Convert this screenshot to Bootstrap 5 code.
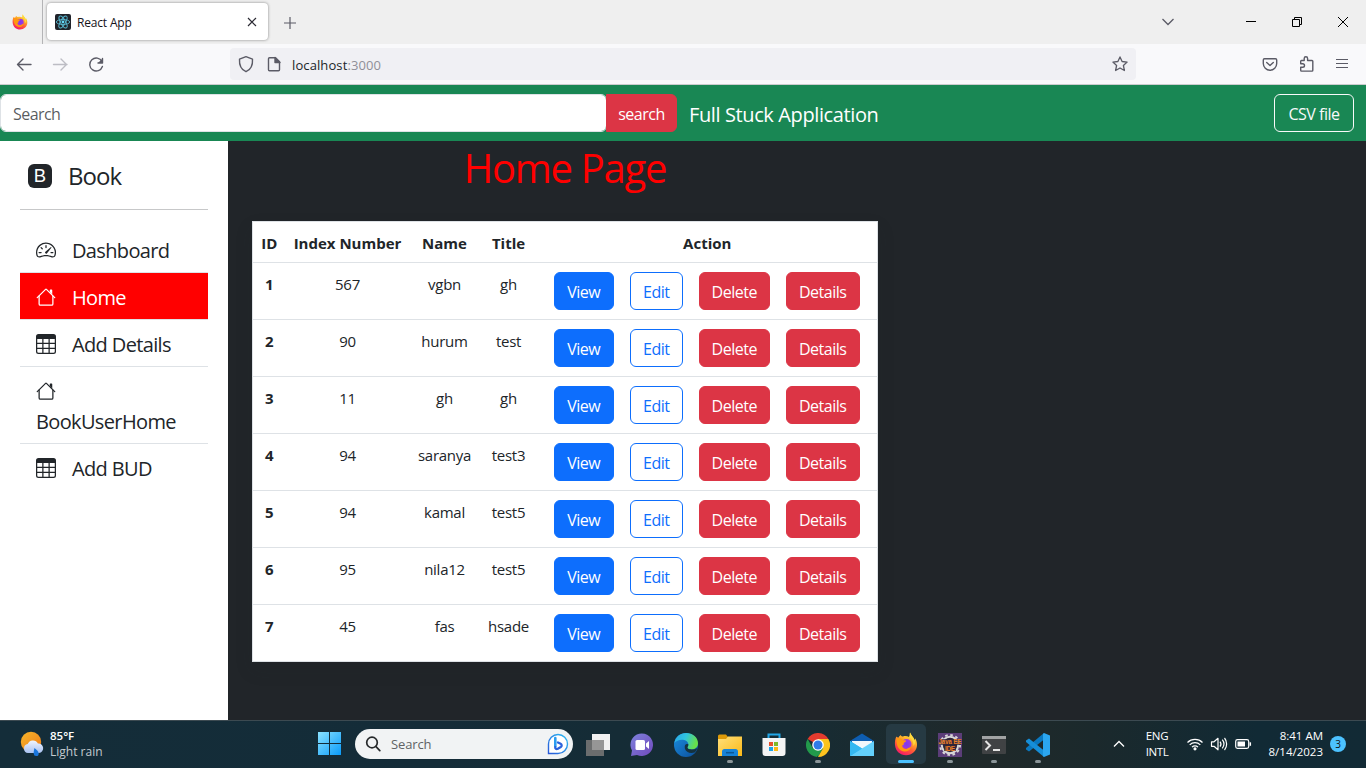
<!DOCTYPE html>
<html lang="en">
<head>
<meta charset="utf-8">
<title>React App</title>
<link rel="stylesheet" href="https://cdn.jsdelivr.net/npm/bootstrap@5.3.0/dist/css/bootstrap.min.css">
<style>
body{font-family:"Open Sans","Noto Sans",sans-serif;width:1366px;height:768px;overflow:hidden;letter-spacing:-.024em;font-size:16px}
svg{display:block;flex:none}
.tabs{height:44px;background:#efefef}
.pinned{width:43px;height:44px;border-right:1px solid #b4b4b6}
.tab-main{width:221px;height:37px;margin:3px 0 0 4px;border-radius:4px;background:#fff;box-shadow:0 0 3px rgba(0,0,0,.45);font-size:12px;color:#15141a;letter-spacing:-.015em}
.tools{height:41px;background:#f9f9fb;border-bottom:1px solid #ccccce}
.urlbar{width:906px;height:32px;background:#f0f0f4;border-radius:4px;font-size:13px;letter-spacing:.008em}
.topnav{height:56px;background:#198754}
.search-field{width:607px;height:38px;letter-spacing:-.035em;padding-top:7px}
.search-btn{width:71px;height:38px;margin-left:-1px;border-top-left-radius:0;border-bottom-left-radius:0;padding:7px 0 5px}
.brand-text{margin-left:12px;padding-top:4px}
.csv-btn{width:80px;height:38px;margin-right:12px;padding:7px 0 5px}
.btn{letter-spacing:-.03em}
.app{height:579px;background:#212529}
.side{width:228px;padding:20px 20px 0}
.brandrow{height:32px;padding-left:8px;font-size:24px;letter-spacing:-.04em}
.logo-sq{width:24px;height:24px;border-radius:6px;background:#212529;color:#fff;font:500 18.5px/24px "Liberation Sans",sans-serif;text-align:center;letter-spacing:0;margin-top:-2px}
.side hr{margin:16px 0;color:#212529}
.side .list-group-item{padding:10px 16px 6px;font-size:20px;line-height:30px;letter-spacing:-.032em;border-color:#dee2e6;color:#212529;border-width:0 0 1px;background:#fff}
.side .list-group-item:last-child{border-bottom:0}
.side .list-group-item.on{background:#f00;color:#fff}
.side svg{width:20px;height:20px;margin:-2px 16px 0 0}
.content-col{width:674px}
.page-title{font-size:40px;color:#f00;height:48px;line-height:48px;margin:3px 0 29px;letter-spacing:-.032em}
.book-table{width:626px;table-layout:fixed;border:1px solid #dee2e6;font-size:15px;letter-spacing:-.018em}
.book-table th{font-size:15px;letter-spacing:0}
.book-table td,.book-table th{padding:9px 0 8px;line-height:24px;color:#212529}
.book-table thead tr{height:41px}
.book-table thead th{padding-bottom:7px}
.book-table tbody tr{height:57px}
.book-table .btn{height:38px;padding:7px 1px 5px 0;margin:0 8px}
.w-view{width:60px}.w-edit{width:53px}.w-del{width:71px}.w-det{width:74px}
.taskbar{height:48px;border-top:1px solid #3c4a51;background:linear-gradient(90deg,#142d39 0,#142c38 32%,#162c34 58%,#20292a 72%,#1b292c 80%,#112a35 92%,#122a35);color:#fff;font-size:11.5px;line-height:16px;padding-bottom:2px}
.tb-search{width:218px;height:30px;border-radius:15px;background:#f1f3f4;color:#606365;font-size:13px;letter-spacing:-.01em}
.slot{width:44px;height:47px;padding-top:1px}
.slot::after{content:"";width:6px;height:3px;border-radius:2px;background:transparent;position:absolute;bottom:5px;left:19px}
.slot.open::after{background:#8b9599}
.slot.active-app{background:#263a43;border-radius:5px;width:40px;height:40px;margin:3px 2px 0;padding-top:0}
.slot.active-app::after{width:16px;left:12px;bottom:1px;background:#4cc2ff}
.notice{width:16px;height:16px;border-radius:50%;background:#4cc2ff;color:#111;font-size:10px}
</style>
</head>
<body class="d-flex flex-column">
<svg width="0" height="0" style="position:absolute">
<defs>
<linearGradient id="ffo" x1=".8" y1="0" x2=".3" y2="1"><stop offset="0" stop-color="#fff44f"/><stop offset=".35" stop-color="#ffb129"/><stop offset=".65" stop-color="#ff5a36"/><stop offset="1" stop-color="#f5156c"/></linearGradient>
<radialGradient id="ffp"><stop offset="0" stop-color="#7a3af0"/><stop offset="1" stop-color="#a23bd8"/></radialGradient>
<symbol id="fox" viewBox="0 0 24 24"><path fill="url(#ffo)" d="M16 .5c-.5 2 .3 3.500-1 4.500-1.500-1-4-1.400-6-.6C7.500 4.800 7 3.500 6.800 3 5.500 3.800 4.800 4.800 4.700 5.500 3.800 5.400 2.800 5.200 2.300 4.500 1.200 7 .7 10 1 13c.6 6 5 10.300 11 10.300s11-4.500 11-10.500c0-3-.8-5-2-6.600.1 1-.1 1.700-.4 2C20 5.500 17 3.500 16 .5z"/><circle cx="12.500" cy="12" r="5" fill="url(#ffp)"/><path fill="#ff980e" d="M2.500 6.500C5 5.500 7 6.500 8.500 8c1.500.4 3.300.2 3.700.8-.2 1.300-2.200 1.600-2.500 2.400.2 1.500-.5 2.200-1.700 2.300.3 3 3 4 5 3.200 1.500-.5 2.500-1.700 4-1.500-1 3-4 4.800-7 4.300C5 18.600 2 14 2.500 6.500z"/><path fill="#ffd83d" d="M16 .5c-.5 2 .3 3.500-1 4.500 3 1.500 5 5 4.300 9 2-2 2.200-4 1.300-5.800C20 5.500 17 3.500 16 .5z"/></symbol>
<symbol id="gauge" viewBox="0 0 16 16"><path d="M8 4a.5.5 0 0 1 .5.5V6a.5.5 0 0 1-1 0V4.500A.5.5 0 0 1 8 4zM3.732 5.732a.5.5 0 0 1 .707 0l.915.914a.5.5 0 1 1-.708.708l-.914-.915a.5.5 0 0 1 0-.707zM2 10a.5.5 0 0 1 .5-.5h1.586a.5.5 0 0 1 0 1H2.500A.5.5 0 0 1 2 10zm9.500 0a.5.5 0 0 1 .5-.5h1.500a.5.5 0 0 1 0 1H12a.5.5 0 0 1-.5-.5zm.754-4.246a.389.389 0 0 0-.527-.02L7.547 9.310a.91.91 0 1 0 1.302 1.258l3.434-4.297a.389.389 0 0 0-.029-.518z"/><path fill-rule="evenodd" d="M0 10a8 8 0 1 1 15.547 2.661c-.442 1.253-1.845 1.602-2.932 1.250C11.309 13.488 9.475 13 8 13c-1.474 0-3.310.488-4.615.911-1.087.352-2.490.003-2.932-1.250A7.988 7.988 0 0 1 0 10zm8-7a7 7 0 0 0-6.603 9.329c.203.575.923.876 1.680.63C4.397 12.533 6.358 12 8 12s3.604.532 4.923.96c.757.245 1.477-.056 1.680-.631A7 7 0 0 0 8 3z"/></symbol>
<symbol id="house" viewBox="0 0 16 16"><path fill-rule="evenodd" d="M2 13.500V7h1v6.500a.5.5 0 0 0 .5.5h9a.5.5 0 0 0 .5-.5V7h1v6.500a1.500 1.500 0 0 1-1.500 1.500h-9A1.500 1.500 0 0 1 2 13.500zm11-11V6l-2-2V2.500a.5.5 0 0 1 .5-.5h1a.5.5 0 0 1 .5.5z"/><path d="M7.293 1.500a1 1 0 0 1 1.414 0l6.647 6.646a.5.5 0 0 1-.708.708L8 2.207 1.354 8.854a.5.5 0 1 1-.708-.708L7.293 1.500z"/></symbol>
<symbol id="grid9" viewBox="0 0 16 16"><path d="M0 2a2 2 0 0 1 2-2h12a2 2 0 0 1 2 2v12a2 2 0 0 1-2 2H2a2 2 0 0 1-2-2V2zm15 2h-4v3h4V4zm0 4h-4v3h4V8zm0 4h-4v3h3a1 1 0 0 0 1-1v-2zm-5 3v-3H6v3h4zm-5 0v-3H1v2a1 1 0 0 0 1 1h3zm-4-4h4V8H1v3zm0-4h4V4H1v3zm5-3v3h4V4H6zm4 4H6v3h4V8z"/></symbol>
</defs></svg>

<header>
  <div class="tabs d-flex align-items-start">
    <div class="pinned d-flex align-items-center"><svg width="16" height="16" style="margin-left:12px"><use href="#fox"/></svg></div>
    <div class="tab-main d-flex align-items-center ps-2">
      <svg width="16" height="16" viewBox="0 0 16 16"><rect width="16" height="16" rx="2" fill="#20232a"/><g fill="none" stroke="#58b8d0" stroke-width=".9"><ellipse cx="8" cy="8" rx="6.700" ry="2.500"/><ellipse cx="8" cy="8" rx="6.700" ry="2.500" transform="rotate(60 8 8)"/><ellipse cx="8" cy="8" rx="6.700" ry="2.500" transform="rotate(120 8 8)"/></g><circle cx="8" cy="8" r="1.400" fill="#61dafb"/></svg>
      <span class="me-auto" style="margin-left:6px;padding-top:2px">React App</span>
      <svg class="me-2" width="16" height="16" viewBox="0 0 16 16" fill="none" stroke="#2b2a33" stroke-width="1.200"><path d="M4 4l8 8M12 4l-8 8"/></svg>
    </div>
    <svg class="ms-3" width="12" height="12" viewBox="0 0 12 12" style="margin-top:17px" stroke="#5b5b66" stroke-width="1.200"><path d="M6 0v12M0 6h12"/></svg>
    <svg class="ms-auto" width="190" height="44" viewBox="1160 0 190 44" fill="none" stroke="#000"><path d="M1162.500 19l5.500 5.500 5.500-5.500" stroke="#5b5b66" stroke-width="1.300"/><path d="M1246 21.500h10M1294.500 19.500v-2h7v7h-2M1292.500 19.500h7v7h-7zM1338 17l10 10M1348 17l-10 10"/></svg><span style="width:16px"></span>
  </div>
  <div class="tools d-flex align-items-center">
    <svg width="230" height="40" viewBox="0 0 230 40" fill="none" stroke="#5b5b66" stroke-width="1.400" stroke-linecap="round" stroke-linejoin="round"><path d="M31 20.500H17.500M23 15l-5.500 5.500L23 26"/><path stroke="#bdbdc4" d="M53.500 20.500H67M61 15l5.500 5.500L61 26"/><path d="M102 17.500a6.500 6.500 0 1 0 .4 5M102.500 14.500V19H98"/><path d="M103 14v5h-5z" fill="#5b5b66" stroke="none"/></svg>
    <div class="urlbar d-flex align-items-center">
      <svg width="62" height="32" viewBox="230 48 62 32" fill="none" stroke="#5b5b66" stroke-width="1.400" stroke-linejoin="round"><path d="M246 56.700l6.500 2.500c.4 6-1.500 10.300-6.500 12.500-5-2.200-6.900-6.500-6.500-12.500z"/><path d="M269.500 57.700h6l4 4v8a1 1 0 0 1-1 1h-9a1 1 0 0 1-1-1v-11a1 1 0 0 1 1-1z"/><path d="M275 57.500v5h5z" fill="#5b5b66"/></svg>
      <span class="me-auto" style="padding-top:3px">localhost<span style="color:#8f8f98">:3000</span></span>
      <svg width="16" height="16" viewBox="0 0 16 16" fill="none" stroke="#5b5b66" stroke-width="1.300" stroke-linejoin="round" style="margin-right:8px"><path d="M8 .9l2.100 4.600 5 .6-3.700 3.400 1 5L8 12l-4.400 2.500 1-5L.9 6.100l5-.6z"/></svg>
    </div>
    <svg class="ms-auto" width="90" height="40" viewBox="1260 44 90 40" fill="none" stroke="#5b5b66" stroke-width="1.400" stroke-linejoin="round"><path d="M1264.500 58.700h11a1.200 1.200 0 0 1 1.200 1.200v3.600a6.700 6.700 0 0 1-13.400 0v-3.600a1.200 1.200 0 0 1 1.200-1.200z"/><path stroke-linecap="round" d="M1266.700 62.500l3.300 3 3.300-3"/><path d="M1301.500 60.500h2.700v-2a1.700 1.700 0 0 1 3.400 0v2h4.400a.8.800 0 0 1 .8.8v9a.8.800 0 0 1-.8.800h-10.500a.8.800 0 0 1-.8-.8v-3h2a1.800 1.800 0 0 0 0-3.600h-2v-2.400a.8.800 0 0 1 .8-.8z"/><path d="M1336 59.500h12M1336 63.500h12M1336 67.500h12" stroke-width="1.200"/></svg><span style="width:16px"></span>
  </div>
</header>

<nav class="topnav d-flex align-items-center flex-shrink-0">
  <input class="form-control search-field" placeholder="Search">
  <button class="btn btn-danger search-btn">search</button>
  <span class="text-white fs-5 brand-text">Full Stuck Application</span>
  <button class="btn btn-outline-light ms-auto csv-btn">CSV file</button>
</nav>

<main class="app d-flex flex-shrink-0">
  <aside class="side bg-white">
    <div class="brandrow d-flex align-items-center"><span class="logo-sq me-3">B</span><span style="margin-top:-2px">Book</span></div>
    <hr>
    <div class="list-group list-group-flush">
      <a class="list-group-item d-flex align-items-center"><svg fill="currentColor"><use href="#gauge"/></svg>Dashboard</a>
      <a class="list-group-item d-flex align-items-center on"><svg fill="currentColor"><use href="#house"/></svg>Home</a>
      <a class="list-group-item d-flex align-items-center"><svg fill="currentColor"><use href="#grid9"/></svg>Add Details</a>
      <a class="list-group-item"><svg fill="currentColor" style="margin:4px 0 5px"><use href="#house"/></svg><span class="d-block" style="padding-top:1px">BookUserHome</span></a>
      <a class="list-group-item d-flex align-items-center"><svg fill="currentColor"><use href="#grid9"/></svg>Add BUD</a>
    </div>
  </aside>
  <section class="content-col text-center">
    <h1 class="page-title fw-normal">Home Page</h1>
    <table class="table book-table bg-white shadow ms-4 mb-0">
      <colgroup><col style="width:33px"><col style="width:124px"><col style="width:70px"><col style="width:58px"><col></colgroup>
      <thead><tr><th>ID</th><th>Index Number</th><th>Name</th><th>Title</th><th>Action</th></tr></thead>
      <tbody id="rows"></tbody>
    </table>
  </section>
</main>

<footer class="taskbar d-flex align-items-center flex-shrink-0">
  <svg width="24" height="26" viewBox="0 0 24 26" style="margin-left:20px"><defs><linearGradient id="sun" x1="0" y1="0" x2="1" y2="1"><stop stop-color="#f5b62a"/><stop offset="1" stop-color="#f07a1a"/></linearGradient><linearGradient id="cl" x1="0" y1="0" x2="0" y2="1"><stop stop-color="#f0f5ff"/><stop offset="1" stop-color="#a9c2f2"/></linearGradient></defs><circle cx="11" cy="11" r="10.200" fill="url(#sun)"/><path d="M8 22a4.500 4.500 0 0 1-.3-8.900 5.500 5.500 0 0 1 10.200-.5A4.700 4.700 0 0 1 19 22z" fill="url(#cl)"/><path d="M14.500 17c2.500 2 4.200 3.500 4.200 5.500a2.500 2.500 0 0 1-5 .2c-.1-2 .3-4 .8-5.700z" fill="#1976dd"/></svg>
  <div class="ms-1" style="width:270px;padding-left:2px"><div class="fw-semibold" style="letter-spacing:0">85°F</div><div style="color:#c3cbcf;font-size:12px;letter-spacing:0">Light rain</div></div>
  <svg width="23" height="23" viewBox="0 0 23 23"><defs><linearGradient id="win" x1="0" y1="0" x2="1" y2="1" ><stop stop-color="#8ae2ff"/><stop offset="1" stop-color="#0a9bfa"/></linearGradient></defs><path fill="url(#win)" d="M0 0h11v11H0zM12 0h11v11H12zM0 12h11v11H0zM12 12h11v11H12z"/></svg>
  <div class="tb-search d-flex align-items-center" style="margin-left:14px">
    <svg width="16" height="16" viewBox="0 0 16 16" style="margin:0 10px" fill="none" stroke="#26292b" stroke-width="1.700" stroke-linecap="round"><circle cx="7" cy="6.500" r="5.300"/><path d="M11 10.700l3.800 4"/></svg><span class="me-auto">Search</span>
    <svg width="22" height="22" viewBox="0 0 22 22" style="margin-right:4px"><defs><linearGradient id="bg1" x1="1" y1="0" x2="0" y2="1"><stop stop-color="#2dbdf3"/><stop offset="1" stop-color="#2858d8"/></linearGradient></defs><path d="M1.500 20.500V11A9.500 9.500 0 1 1 11 20.500z" fill="#fff" stroke="url(#bg1)" stroke-width="1.400"/><path d="M8.300 5v8.500" fill="none" stroke="#2b9df0" stroke-width="2.600" stroke-linecap="round"/><path d="M11 9.500l2.600 1.200a1.900 1.900 0 0 1 .2 3.300l-3 1.800c-1.500.8-2.700 0-2.500-1.600" fill="none" stroke="#2b62dc" stroke-width="2.300" stroke-linejoin="round" stroke-linecap="round"/></svg>
  </div>
  <div class="d-flex" style="margin-left:3px;height:47px;margin-bottom:-2px">
    <div class="slot position-relative d-flex align-items-center justify-content-center"><svg width="24" height="24" viewBox="0 0 24 24"><path fill="#f1f1f1" d="M6 1h18v16H6z"/><path fill="#6b6d6e" d="M0 7h18v16H0z"/><path fill="#969696" d="M6 7h12v10H6z"/></svg></div>
    <div class="slot position-relative d-flex align-items-center justify-content-center"><svg width="24" height="24" viewBox="0 0 24 24"><defs><linearGradient id="cht" x1="0" y1="0" x2="1" y2="1"><stop stop-color="#7d82dc"/><stop offset="1" stop-color="#7149bd"/></linearGradient></defs><path fill="url(#cht)" d="M1 23l1-5.500A11.300 11.300 0 1 1 7 22z"/><rect x="5.500" y="7" width="9.500" height="10" rx="1.500" fill="#fff"/><path fill="#fff" d="M16 10.500l3-2.500v8l-3-2.500z"/></svg></div>
    <div class="slot position-relative d-flex align-items-center justify-content-center"><svg width="24" height="24" viewBox="0 0 24 24"><defs><linearGradient id="ed1" x1="0" y1="0" x2="1" y2=".3"><stop stop-color="#2aa5e8"/><stop offset=".5" stop-color="#2fc3df"/><stop offset="1" stop-color="#67e04a"/></linearGradient><linearGradient id="ed2" x1="0" y1="0" x2="1" y2="1"><stop stop-color="#1b8fe0"/><stop offset="1" stop-color="#0b4d9a"/></linearGradient></defs><circle cx="12" cy="12" r="12" fill="url(#ed2)"/><path fill="url(#ed1)" d="M.3 10C1.500 3.500 6.500 0 12 0c7 0 12 4.700 12 10.300 0 4-3 6.200-6.300 6.200-2.500 0-4.300-1-4.300-2 0-.8 1-1.200 1-3C14.300 9 12 7 9 6.800 5 6.500 2 8 .3 10z"/><path fill="#15323f" d="M14.400 11.500c0 1.800-1 2.200-1 3 0 1 1.800 2 4.300 2 2 0 3.800-.5 5-1.500l.2 1.500-2 2.700c-4 1.800-9 .3-10-3.700-.8-3 1-5.500 3.500-4z"/></svg></div>
    <div class="slot open position-relative d-flex align-items-center justify-content-center"><svg width="24" height="24" viewBox="0 0 24 24"><defs><linearGradient id="fol" x1="0" y1="0" x2="1" y2="1"><stop stop-color="#ffe07b"/><stop offset="1" stop-color="#fbb917"/></linearGradient></defs><path fill="#dd9a08" d="M0 3a1.500 1.500 0 0 1 1.500-1.500H8L10 4v6H0z"/><path fill="url(#fol)" d="M0 6h8l2-2.500h14V23H0z"/><path fill="#1683d8" d="M4 23v-4.500a2.500 2.500 0 0 1 2.500-2.500h11a2.500 2.500 0 0 1 2.500 2.500V23z"/><path d="M8 19.700h8" stroke="#0b5694" stroke-width="1.500"/></svg></div>
    <div class="slot position-relative d-flex align-items-center justify-content-center"><svg width="24" height="24" viewBox="0 0 24 24"><path d="M6.500 6V1.500h11V6" fill="none" stroke="#22a7e8" stroke-width="2"/><path fill="#f4f4f4" d="M.5 5h23v15a3 3 0 0 1-3 3h-17a3 3 0 0 1-3-3z"/><path fill="#e8502a" d="M7 9h4v4H7z"/><path fill="#7fb928" d="M12 9h4v4h-4z"/><path fill="#1ca3e8" d="M7 14h4v4H7z"/><path fill="#fcb813" d="M12 14h4v4h-4z"/></svg></div>
    <div class="slot open position-relative d-flex align-items-center justify-content-center"><svg width="24" height="24" viewBox="0 0 24 24"><path fill="#e33b2e" d="M12 12L1.600 6A12 12 0 0 1 22.400 6z"/><path fill="#229a4b" d="M1.600 6l5.200 9L12 18l-1 6A12 12 0 0 1 1.600 6z"/><path fill="#229a4b" d="M6.800 15l10.400 0L12 24z"/><path fill="#fcc31e" d="M17.200 15L12 24A12 12 0 0 0 22.400 6H12v6z"/><circle cx="12" cy="12" r="5.800" fill="#fff"/><circle cx="12" cy="12" r="4.500" fill="#307ae8"/></svg></div>
    <div class="slot position-relative d-flex align-items-center justify-content-center"><svg width="24" height="24" viewBox="0 0 24 24"><path fill="#0e5db0" d="M0 8L12 .5 24 8v7H0z"/><path fill="#f2f7fb" d="M2 8h20v4l-10 5L2 12z"/><path fill="#35b8f1" d="M0 8l24 15H0z"/><path fill="#63d0fb" d="M24 8v15H0z"/><path fill="#35b8f1" d="M0 8v15l12-7.500z"/></svg></div>
    <div class="slot active-app position-relative d-flex align-items-center justify-content-center"><svg width="24" height="24"><use href="#fox"/></svg></div>
    <div class="slot open position-relative d-flex align-items-center justify-content-center"><svg width="24" height="24" viewBox="0 0 24 24"><path fill="#5b3d78" d="M0 0h24v24H0z"/><circle cx="12" cy="12" r="8.200" fill="#302638" stroke="#d7d7d7" stroke-width="2"/><circle cx="12" cy="12" r="10" fill="none" stroke="#d7d7d7" stroke-width="2" stroke-dasharray="2.600 2.636"/><path d="M1 6h22v6H1zM6 12h12v6H6z" fill="#302638" opacity=".75"/><g fill="#f08226" font-family="Liberation Sans,sans-serif" font-weight="700" font-size="6.500" letter-spacing="0"><text x=".5" y="11" textLength="23" lengthAdjust="spacingAndGlyphs">Java EE</text><text x="7" y="17.500" textLength="10">IDE</text></g></svg></div>
    <div class="slot open position-relative d-flex align-items-center justify-content-center"><svg width="24" height="24" viewBox="0 0 24 24"><rect y="3" width="24" height="18" rx="1" fill="#404244"/><path d="M0 3h24v3H0z" fill="#a1a3a4"/><path d="M3.500 8l4.500 4.500L3.500 17M11 17h7" fill="none" stroke="#e4e4e4" stroke-width="2"/></svg></div>
    <div class="slot open position-relative d-flex align-items-center justify-content-center"><svg width="24" height="24" viewBox="0 0 24 24"><path fill="#0a78c0" d="M18 0v6.500L3 18.500 0 16.500v-1.500z"/><path fill="#168ed8" d="M0 7.500l3-2L18 17.500V24L0 9z"/><path fill="#2ba6f0" d="M18 0l6 2.500v19L18 24l-1-1V1z"/></svg></div>
  </div>
  <svg width="12" height="8" viewBox="0 0 12 8" style="margin-left:53px" fill="none" stroke="#fff" stroke-width="1.300"><path d="M1 6.500l5-5 5 5"/></svg>
  <div class="text-center" style="margin-left:16px;width:32px"><div>ENG</div><div>INTL</div></div>
  <svg width="66" height="20" viewBox="1186 734 66 20" style="margin-left:13px" fill="none" stroke="#fff" stroke-width="1.200"><path d="M1187.500 742.500a10.500 10.500 0 0 1 15 0M1189.700 744.900a7.500 7.500 0 0 1 10.600 0M1192 747.200a4.200 4.200 0 0 1 6 0"/><circle cx="1195" cy="748.800" r="1" fill="#fff"/><path stroke-linejoin="round" d="M1211.500 741.800h2.500l4-3.500v11.500l-4-3.500h-2.500zM1220 741.500a4 4 0 0 1 0 5M1222.300 739.700a7 7 0 0 1 0 8.600M1224.500 738a9.500 9.500 0 0 1 0 12"/><rect x="1235.700" y="739.700" width="13" height="8.600" rx="1.800"/><path d="M1237.500 741.500h7.500v5h-7.500z" fill="#fff" stroke="none"/><path d="M1250.300 742.300v3.500" stroke-width="1.500"/></svg>
  <div class="text-end" style="width:71px;letter-spacing:0"><div>8:41 AM</div><div>8/14/2023</div></div>
  <div class="notice d-flex align-items-center justify-content-center" style="margin-left:7px">3</div>
</footer>
<script src="https://cdn.jsdelivr.net/npm/bootstrap@5.3.0/dist/js/bootstrap.bundle.min.js"></script>
<script>
const books=[[1,567,"vgbn","gh"],[2,90,"hurum","test"],[3,11,"gh","gh"],[4,94,"saranya","test3"],[5,94,"kamal","test5"],[6,95,"nila12","test5"],[7,45,"fas","hsade"]];
document.getElementById("rows").innerHTML=books.map(([id,n,name,title])=>`<tr><th>${id}</th><td>${n}</td><td>${name}</td><td>${title}</td><td><div class="d-flex justify-content-center"><button class="btn btn-primary w-view">View</button><button class="btn btn-outline-primary w-edit">Edit</button><button class="btn btn-danger w-del">Delete</button><button class="btn btn-danger w-det">Details</button></div></td></tr>`).join("");
</script>
</body>
</html>
